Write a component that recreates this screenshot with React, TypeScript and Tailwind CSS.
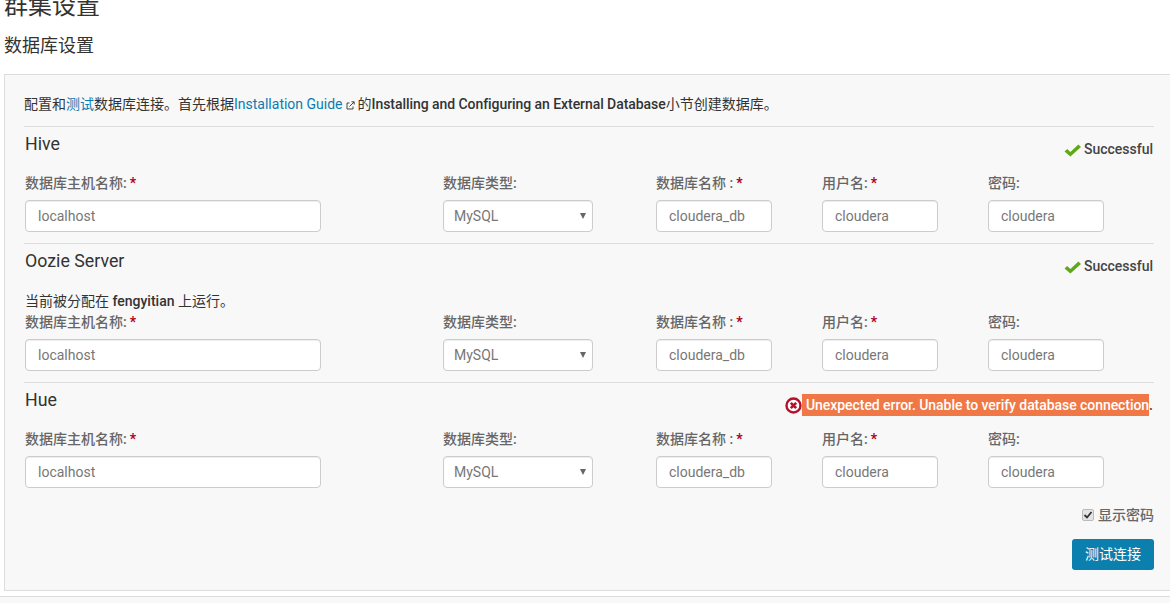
const fontClass = "font-['Roboto','Noto_Sans_CJK_SC',sans-serif]";

const inputClassName =
  "block h-8 rounded-[4px] border border-[#ccc] bg-white px-3 text-[14px] text-[#777] shadow-[inset_0_1px_1px_rgba(0,0,0,0.075)] outline-none";

function Required() {
  return <span className="ml-[3px] font-bold text-[#b00020]">*</span>;
}

function FieldLabel({ text, required }: { text: string; required?: boolean }) {
  return (
    <label className="mb-[7px] block h-5 text-[14px] leading-5 font-medium text-[#666]">
      {text}
      {required && <Required />}
    </label>
  );
}

function CheckIcon() {
  return (
    <svg width="17" height="14" viewBox="0 0 16 14" preserveAspectRatio="none" className="mr-[3px] mt-[2px]">
      <path d="M0.5 8.5 L3 6 L6 9 L13.5 1.5 L16 4 L6 13.5 Z" fill="#5fa818" />
    </svg>
  );
}

function ErrorIcon() {
  return (
    <svg width="17" height="17" viewBox="0 0 17 17">
      <circle cx="8.5" cy="8.5" r="7" fill="#fff" stroke="#b5112b" strokeWidth="2.4" />
      <path d="M5.8 5.8 L11.2 11.2 M11.2 5.8 L5.8 11.2" stroke="#b5112b" strokeWidth="2.6" />
    </svg>
  );
}

function ExternalIcon() {
  return (
    <svg width="9" height="9" viewBox="0 0 9 9" fill="none" stroke="#444" strokeWidth="1" className="ml-[3px] mr-[3px] inline-block align-[-1px]">
      <path d="M3.5 2 H1 V8 H7 V5.5" />
      <path d="M3.5 5.5 L8 1 M5.5 0.8 H8.2 V3.5" />
    </svg>
  );
}

function DbRow() {
  return (
    <div className="grid grid-cols-[418px_213px_166px_166px_116px] pl-px">
      <div>
        <FieldLabel text="数据库主机名称:" required />
        <input className={`${inputClassName} w-[296px]`} defaultValue="localhost" />
      </div>
      <div>
        <FieldLabel text="数据库类型:" />
        <div className="relative w-[150px]">
          <select className="block h-8 w-full appearance-none rounded-[4px] border border-[#ccc] bg-white pl-[10px] text-[14px] text-[#777] shadow-[inset_0_1px_1px_rgba(0,0,0,0.075)] outline-none">
            <option>MySQL</option>
          </select>
          <svg width="6" height="6" viewBox="0 0 6 6" className="pointer-events-none absolute right-[7px] top-[13px]">
            <path d="M0 0 H6 L3 6 Z" fill="#666" />
          </svg>
        </div>
      </div>
      <div>
        <FieldLabel text="数据库名称 :" required />
        <input className={`${inputClassName} w-[116px]`} defaultValue="cloudera_db" />
      </div>
      <div>
        <FieldLabel text="用户名:" required />
        <input className={`${inputClassName} w-[116px]`} defaultValue="cloudera" />
      </div>
      <div>
        <FieldLabel text="密码:" />
        <input className={`${inputClassName} w-[116px]`} defaultValue="cloudera" />
      </div>
    </div>
  );
}

function Success() {
  return (
    <div className="mt-3 flex h-5 items-center pr-px text-[14px] font-medium text-[#444]">
      <CheckIcon />
      Successful
    </div>
  );
}

function SectionHeader({ title, children }: { title: string; children: React.ReactNode }) {
  return (
    <div className="flex h-[46px] justify-between">
      <h4 className="pl-px text-[17.8px] leading-[34px] text-[#333]">{title}</h4>
      {children}
    </div>
  );
}

export default function App() {
  return (
    <div className={`${fontClass} relative h-[603px] w-[1170px] overflow-hidden bg-white text-[#333]`}>
      <h1 className="-mt-[9px] pl-1 text-[24px] leading-[30px] text-[#333]">群集设置</h1>
      <h2 className="mt-[10px] h-[29px] pl-1 text-[18px] leading-[29px] text-[#333]">数据库设置</h2>
      <div className="ml-1 mt-[14px] h-[517px] w-[1180px] border border-[#ddd] bg-[#f8f8f8] pl-[19px] pt-[19px]">
        <div className="w-[1130px]">
          <p className="h-[32px] text-[14px] leading-5">
            配置和<span className="text-[#0a7cb0]">测试</span>数据库连接。首先根据
            <span className="text-[#0a7cb0]">Installation Guide</span>
            <ExternalIcon />的
            <span className="font-medium tracking-[-0.06px]">Installing and Configuring an External Database</span>小节创建数据库。
          </p>
          <section className="border-t border-[#ddd] pb-[11px]">
            <SectionHeader title="Hive">
              <Success />
            </SectionHeader>
            <DbRow />
          </section>
          <section className="border-t border-[#ddd] pb-[11px]">
            <SectionHeader title="Oozie Server">
              <Success />
            </SectionHeader>
            <p className="mt-px h-[21px] pl-px text-[14px] leading-5">
              当前被分配在 <span className="font-medium">fengyitian</span> 上运行。
            </p>
            <DbRow />
          </section>
          <section className="border-t border-[#ddd]">
            <SectionHeader title="Hue">
              <div className="mt-[11px] flex h-[22px] items-center pr-px text-[14px] font-medium">
                <ErrorIcon />
                <span className="bg-[#f07846] pl-1 leading-[22px] tracking-[-0.055px] text-white">
                  Unexpected error. Unable to verify database connection
                </span>
                <span className="text-[#444]">.</span>
              </div>
            </SectionHeader>
            <DbRow />
          </section>
          <div className="mt-[17px] flex h-5 items-center justify-end text-[14px] font-medium text-[#666]">
            <span className="relative mr-1 h-3 w-3">
              <input
                type="checkbox"
                defaultChecked
                className="block h-3 w-3 appearance-none rounded-[2px] border border-[#bbb] bg-[#e4e4e4]"
              />
              <svg width="10" height="10" viewBox="0 0 10 10" className="pointer-events-none absolute left-px top-px">
                <path d="M1.5 5 L4 7.5 L8.5 2" fill="none" stroke="#333" strokeWidth="1.8" />
              </svg>
            </span>
            显示密码
          </div>
          <div className="mt-[14px] flex justify-end">
            <button className="h-[31px] w-[82px] rounded-[3px] bg-[#0b7fae] text-[14px] text-white">测试连接</button>
          </div>
        </div>
      </div>
      <div className="mt-[5px] h-[30px] border-t border-[#ddd] bg-[#f8f8f8]" />
    </div>
  );
}
